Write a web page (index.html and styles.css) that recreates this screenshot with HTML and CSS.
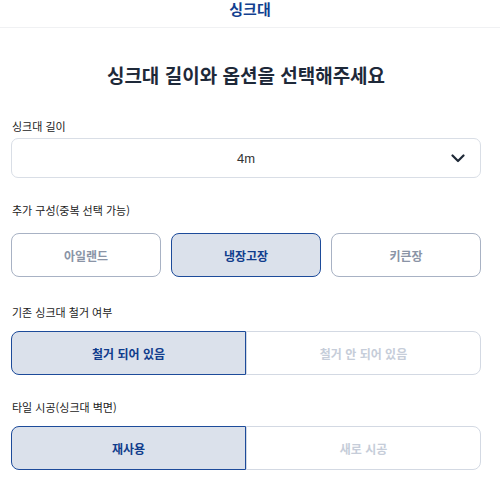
FILE: index.html
```html
<!DOCTYPE html>
<html lang="ko">
<head>
  <meta charset="UTF-8" />
  <meta name="viewport" content="width=device-width, initial-scale=1.0" />
  <title>싱크대</title>
  <link rel="stylesheet" href="styles.css">
</head>
<body>
  <header class="top-bar">싱크대</header>
  <main class="container">
    <h2>싱크대 길이와 옵션을 선택해주세요</h2>

    <section class="field">
      <div class="field-label">싱크대 길이</div>
      <div class="select-box">
        <span class="select-value">4m</span>
        <svg class="chevron" width="14" height="9" viewBox="0 0 14 9">
          <path d="M1.5 1.5 L7 7 L12.5 1.5" fill="none" stroke="#1f2937" stroke-width="2.2" stroke-linecap="round" stroke-linejoin="round"/>
        </svg>
      </div>
    </section>

    <section class="field">
      <div class="field-label label-wide">추가 구성(중복 선택 가능)</div>
      <div class="option-grid">
        <button class="option-btn">아일랜드</button>
        <button class="option-btn active">냉장고장</button>
        <button class="option-btn">키큰장</button>
      </div>
    </section>

    <section class="field">
      <div class="field-label label-mid">기존 싱크대 철거 여부</div>
      <div class="segment">
        <button class="segment-btn active">철거 되어 있음</button>
        <button class="segment-btn">철거 안 되어 있음</button>
      </div>
    </section>

    <section class="field">
      <div class="field-label label-mid">타일 시공(싱크대 벽면)</div>
      <div class="segment">
        <button class="segment-btn active">재사용</button>
        <button class="segment-btn">새로 시공</button>
      </div>
    </section>
  </main>
</body>
</html>
```

FILE: styles.css
```css
body {
  font-family: "Noto Sans CJK KR", "Noto Sans", sans-serif;
  background-color: #fff;
  margin: 0;
  padding: 0;
  color: #1f2937;
}
.top-bar {
  height: 27px;
  line-height: 18px;
  text-align: center;
  font-size: 15px;
  font-weight: 700;
  color: #123f8f;
  border-bottom: 1px solid #f0f1f3;
}
.container {
  padding: 0 19px 0 11px;
}
h2 {
  font-size: 19px;
  line-height: 28px;
  font-weight: 700;
  color: #1e2939;
  text-align: center;
  margin: 33px 0 29px;
}
.field-label {
  font-size: 11px;
  line-height: 16px;
  color: #222;
  margin: 0 0 4px 1px;
}
.label-wide {
  margin-top: 24px;
  margin-bottom: 15px;
}
.label-mid {
  margin-top: 27px;
  margin-bottom: 11px;
}
.field:last-child .label-mid {
  margin-top: 24px;
}
.select-box {
  position: relative;
  height: 38px;
  border: 1px solid #d9dee6;
  border-radius: 7px;
  display: flex;
  align-items: center;
  justify-content: center;
}
.select-value {
  font-family: "Liberation Sans", Arial, sans-serif;
  font-size: 13px;
  color: #333;
}
.chevron {
  position: absolute;
  right: 15px;
  top: 15px;
}
.option-grid {
  display: grid;
  grid-template-columns: repeat(3, 1fr);
  gap: 10px;
}
button {
  font-family: inherit;
  cursor: pointer;
}
.option-btn {
  height: 44px;
  background: #fff;
  border: 1px solid #a8b2c4;
  border-radius: 8px;
  font-size: 12px;
  font-weight: 700;
  color: #8a94a6;
}
.option-btn.active {
  background: #dbe1eb;
  border-color: #1d4b9a;
  color: #103c8c;
}
.segment {
  display: flex;
}
.segment-btn {
  flex: 1;
  height: 44px;
  background: #fff;
  border: 1px solid #d3d9e3;
  border-radius: 0 8px 8px 0;
  font-size: 12px;
  font-weight: 700;
  color: #c6cdd9;
}
.segment-btn.active {
  background: #dbe1eb;
  border-color: #1d4b9a;
  border-radius: 8px 0 0 8px;
  color: #103c8c;
}
```
